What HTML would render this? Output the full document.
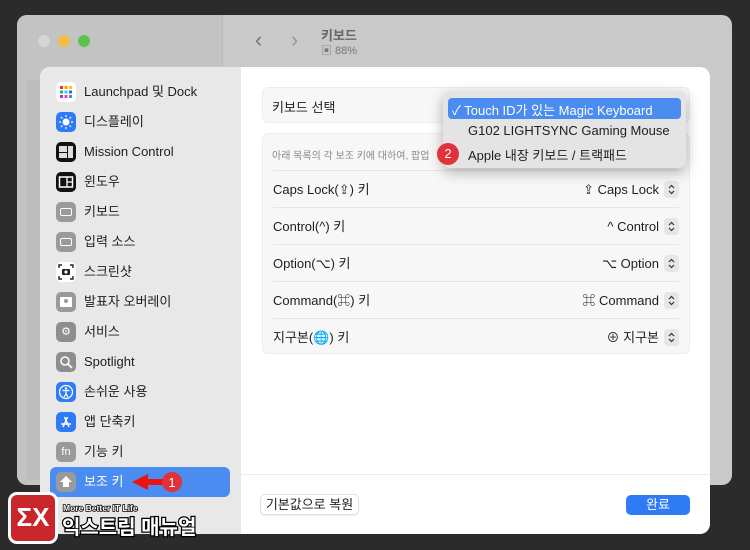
<!DOCTYPE html><html><head><meta charset="utf-8"><style>
*{margin:0;padding:0;box-sizing:border-box}
body{width:750px;height:550px;background:#2b2b2b;position:relative;overflow:hidden;font-family:"Liberation Sans","Noto Sans CJK KR",sans-serif;color:#1e1e1e}
.a{position:absolute}
.win{left:17px;top:15px;width:715px;height:470px;background:#c9c9c9;border-radius:10px;overflow:hidden}
.side{left:0;top:0;width:206px;height:470px;background:#c3c3c3;border-right:1px solid #bcbcbc}
.dot{width:12px;height:12px;border-radius:50%;top:20px}
.sheet{left:40px;top:67px;width:670px;height:467px;background:#fff;border-radius:10px;overflow:hidden}
.sb{left:0;top:0;width:201px;height:467px;background:#e8e8e8}
.item{position:absolute;left:16px;height:20px;font-size:13px;line-height:20px;padding-left:28px;white-space:nowrap}
.ic{position:absolute;left:0;top:0;width:20px;height:20px;border-radius:5px}
.box{background:#f7f7f7;border:1px solid #ececec;border-radius:6px}
.row{position:absolute;left:10px;right:10px;height:37px;font-size:13px;line-height:37px;border-top:1px solid #e6e6e6}
.val{position:absolute;right:0;top:0;padding-right:20px}
.st{position:absolute;right:0;top:10px;width:15px;height:17px;background:#e6e6e6;border-radius:4px;line-height:0}
.st svg{display:block}
</style></head><body>
<div class="a win">
 <div class="a side"></div>
 <div class="a dot" style="left:21px;background:#d5d5d5"></div>
 <div class="a dot" style="left:41px;background:#f2bd44"></div>
 <div class="a dot" style="left:61px;background:#5cc24c"></div>
 <div class="a" style="left:238px;top:12px;font-size:22px;color:#777">&#8249;</div>
 <div class="a" style="left:274px;top:12px;font-size:22px;color:#999">&#8250;</div>
 <div class="a" style="left:304px;top:10px;font-size:13px;font-weight:bold;color:#666">키보드</div>
 <div class="a" style="left:304px;top:27px;font-size:11px;color:#777">▣ 88%</div>
 <div class="a" style="left:10px;top:65px;width:20px;height:400px;background:#bdbdbd"></div>
</div>
<div class="a sheet">
 <div class="a sb">
  <div class="item" style="top:15px"><div class="ic" style="background:#fff;"><svg width="20" height="20"><g><rect x="4" y="4" width="3" height="3" fill="#e33"/><rect x="8.5" y="4" width="3" height="3" fill="#f90"/><rect x="13" y="4" width="3" height="3" fill="#fc0"/><rect x="4" y="8.5" width="3" height="3" fill="#3b3"/><rect x="8.5" y="8.5" width="3" height="3" fill="#3cf"/><rect x="13" y="8.5" width="3" height="3" fill="#36f"/><rect x="4" y="13" width="3" height="3" fill="#a3f"/><rect x="8.5" y="13" width="3" height="3" fill="#f3a"/><rect x="13" y="13" width="3" height="3" fill="#39c"/></g></svg></div>Launchpad 및 Dock</div>
  <div class="item" style="top:45px"><div class="ic" style="background:#2f7bf5"><svg width="20" height="20"><circle cx="10" cy="10" r="3.5" fill="#fff"/><g stroke="#fff" stroke-width="1.2"><path d="M10 3v2M10 15v2M3 10h2M15 10h2M5 5l1.4 1.4M13.6 13.6L15 15M5 15l1.4-1.4M13.6 6.4L15 5"/></g></svg></div>디스플레이</div>
  <div class="item" style="top:75px"><div class="ic" style="background:#111"><svg width="20" height="20"><rect x="3" y="4" width="8" height="6" fill="#ddd"/><rect x="3" y="11" width="8" height="5" fill="#ddd"/><rect x="12" y="4" width="5" height="12" fill="#ddd"/></svg></div>Mission Control</div>
  <div class="item" style="top:105px"><div class="ic" style="background:#111"><svg width="20" height="20"><rect x="3.5" y="5" width="13" height="10" fill="none" stroke="#fff" stroke-width="1.5"/><path d="M11 5v10M11 10h5" stroke="#fff" stroke-width="1.3"/></svg></div>윈도우</div>
  <div class="item" style="top:135px"><div class="ic" style="background:#9a9a9a"><div class="a" style="left:4px;top:6px;width:12px;height:8px;border:1.5px solid #fff;border-radius:2px"></div></div>키보드</div>
  <div class="item" style="top:165px"><div class="ic" style="background:#9a9a9a"><div class="a" style="left:4px;top:6px;width:12px;height:8px;border:1.5px solid #fff;border-radius:2px"></div></div>입력 소스</div>
  <div class="item" style="top:195px"><div class="ic" style="background:#fff"><svg width="20" height="20"><path d="M3 6V3h3M14 3h3v3M17 14v3h-3M6 17H3v-3" stroke="#222" stroke-width="1.4" fill="none"/><rect x="6" y="7" width="8" height="6" rx="1" fill="#222"/><circle cx="10" cy="10" r="1.6" fill="#fff"/></svg></div>스크린샷</div>
  <div class="item" style="top:225px"><div class="ic" style="background:#9a9a9a"><div class="a" style="left:4px;top:5px;width:12px;height:10px;background:#fff;border-radius:1px"></div><div class="a" style="left:8px;top:7px;width:4px;height:4px;background:#9a9a9a;border-radius:50%"></div></div>발표자 오버레이</div>
  <div class="item" style="top:255px"><div class="ic" style="background:#8e8e8e;color:#fff;font-size:11px;line-height:20px;text-align:center">⚙</div>서비스</div>
  <div class="item" style="top:285px"><div class="ic" style="background:#8e8e8e"><svg width="20" height="20"><circle cx="9" cy="9" r="4" stroke="#fff" stroke-width="1.5" fill="none"/><path d="M12 12l4 4" stroke="#fff" stroke-width="1.6"/></svg></div>Spotlight</div>
  <div class="item" style="top:315px"><div class="ic" style="background:#2f7bf5"><svg width="20" height="20"><circle cx="10" cy="10" r="6.5" stroke="#fff" stroke-width="1.3" fill="none"/><circle cx="10" cy="6.5" r="1.2" fill="#fff"/><path d="M6.5 8.5h7M10 8.5v3.5l-2 3M10 12l2 3" stroke="#fff" stroke-width="1.2" fill="none"/></svg></div>손쉬운 사용</div>
  <div class="item" style="top:345px"><div class="ic" style="background:#2f7bf5"><svg width="20" height="20"><path d="M7 15l4.5-10M13 15L8.5 5M5 12h10" stroke="#fff" stroke-width="1.5"/></svg></div>앱 단축키</div>
  <div class="item" style="top:375px"><div class="ic" style="background:#9a9a9a;color:#fff;font-size:11px;line-height:20px;text-align:center">fn</div>기능 키</div>
  <div class="a" style="left:10px;top:400px;width:180px;height:30px;background:#4a8cf0;border-radius:6px"></div>
  <div class="item" style="top:405px;color:#fff"><div class="ic" style="background:#9a9a9a"><svg width="20" height="20"><path d="M10 4l6 6h-3v5H7v-5H4z" fill="#fff"/></svg></div>보조 키</div>
  <svg class="a" style="left:88px;top:402px" width="60" height="28"><path d="M4 13L20 5v5h16v6H20v5z" fill="#e11"/><circle cx="44" cy="13" r="10" fill="#e0323a"/><text x="44" y="18" fill="#fff" font-size="13" text-anchor="middle" font-family="Liberation Sans">1</text></svg>
 </div>
 <div class="a box" style="left:222px;top:20px;width:428px;height:36px"><div class="a" style="left:9px;top:9px;font-size:13px">키보드 선택</div></div>
 <div class="a box" style="left:222px;top:66px;width:428px;height:221px">
  <div class="a" style="left:9px;top:13px;font-size:10px;color:#888">아래 목록의 각 보조 키에 대하여, 팝업</div>
  <div class="row" style="top:36px"><span>Caps Lock(⇪) 키</span><span class="val">⇪ Caps Lock</span><span class="st"><svg width="15" height="17"><path d="M5 7l2.5-2.5L10 7M5 10l2.5 2.5L10 10" stroke="#333" stroke-width="1.2" fill="none"/></svg></span></div>
  <div class="row" style="top:73px"><span>Control(^) 키</span><span class="val">^ Control</span><span class="st"><svg width="15" height="17"><path d="M5 7l2.5-2.5L10 7M5 10l2.5 2.5L10 10" stroke="#333" stroke-width="1.2" fill="none"/></svg></span></div>
  <div class="row" style="top:110px"><span>Option(⌥) 키</span><span class="val">⌥ Option</span><span class="st"><svg width="15" height="17"><path d="M5 7l2.5-2.5L10 7M5 10l2.5 2.5L10 10" stroke="#333" stroke-width="1.2" fill="none"/></svg></span></div>
  <div class="row" style="top:147px"><span>Command(⌘) 키</span><span class="val">⌘ Command</span><span class="st"><svg width="15" height="17"><path d="M5 7l2.5-2.5L10 7M5 10l2.5 2.5L10 10" stroke="#333" stroke-width="1.2" fill="none"/></svg></span></div>
  <div class="row" style="top:184px"><span>지구본(🌐) 키</span><span class="val">⊕ 지구본</span><span class="st"><svg width="15" height="17"><path d="M5 7l2.5-2.5L10 7M5 10l2.5 2.5L10 10" stroke="#333" stroke-width="1.2" fill="none"/></svg></span></div>
 </div>
 <div class="a" style="left:201px;top:407px;width:469px;height:1px;background:#ececec"></div>
 <div class="a" style="left:220px;top:427px;width:99px;height:21px;border:1px solid #e2e2e2;border-radius:5px;font-size:13px;line-height:19px;text-align:center;background:#fff;box-shadow:0 1px 1px rgba(0,0,0,.08)">기본값으로 복원</div>
 <div class="a" style="left:586px;top:428px;width:64px;height:20px;background:#2f7bf5;border-radius:5px;font-size:13px;line-height:20px;text-align:center;color:#fff">완료</div>
</div>
<div class="a" style="left:443px;top:92px;width:243px;height:76px;background:#e4e4e4;border-radius:7px;box-shadow:0 4px 14px rgba(0,0,0,.3)"></div>
<div class="a" style="left:448px;top:98px;width:233px;height:21px;background:#4a8cf0;border-radius:4px"></div>
<div class="a" style="left:452px;top:100px;font-size:13px;color:#fff">✓ Touch ID가 있는 Magic Keyboard</div>
<div class="a" style="left:468px;top:123px;font-size:13px">G102 LIGHTSYNC Gaming Mouse</div>
<div class="a" style="left:468px;top:145px;font-size:13px">Apple 내장 키보드 / 트랙패드</div>
<div class="a" style="left:437px;top:143px;width:22px;height:22px;border-radius:50%;background:#e0323a;color:#fff;font-size:13px;line-height:22px;text-align:center">2</div>
<div class="a" style="left:8px;top:492px;width:50px;height:52px;background:#c8262b;border:3px solid #fff;border-radius:9px;color:#fff;font-weight:bold;font-size:26px;line-height:44px;text-align:center">ΣX</div>
<div class="a" style="left:63px;top:503px;font-size:8.5px;font-weight:bold;color:#fff;-webkit-text-stroke:1.5px #000;paint-order:stroke">More Better IT Life</div>
<div class="a" style="left:62px;top:511px;font-size:20px;font-weight:bold;color:#fff;-webkit-text-stroke:2.5px #000;paint-order:stroke">익스트림 매뉴얼</div>
</body></html>
